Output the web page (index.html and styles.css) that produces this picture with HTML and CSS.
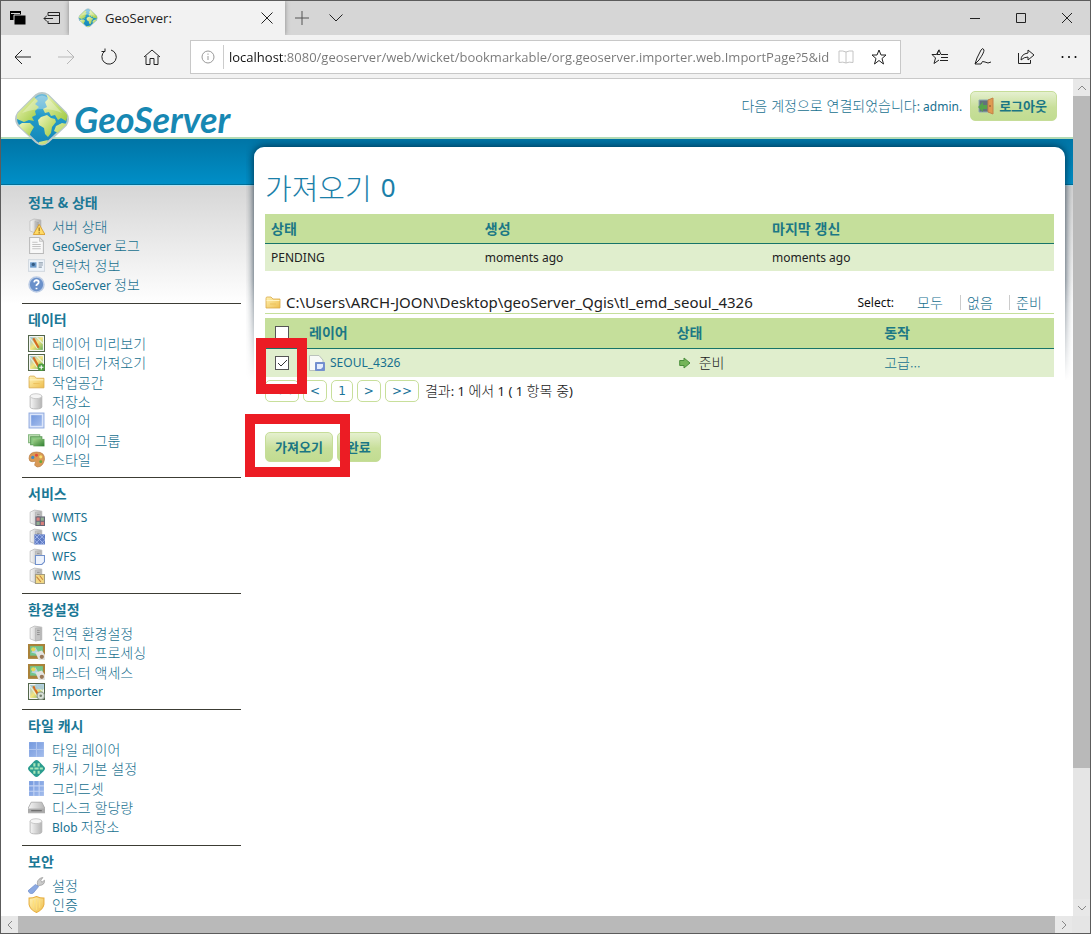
FILE: index.html
```html
<!DOCTYPE html>
<html lang="ko">
<head>
<meta charset="utf-8">
<title>GeoServer:</title>
<link rel="stylesheet" href="styles.css">
</head>
<body>
<svg class="defs" aria-hidden="true">
  <defs>
    <linearGradient id="g-gray" x2="1"><stop stop-color="#f6f6f6"/><stop offset="1" stop-color="#b4b4b4"/></linearGradient>
    <linearGradient id="g-blue" x2="1" y2="1"><stop stop-color="#7398de"/><stop offset="1" stop-color="#a4bdec"/></linearGradient>
    <linearGradient id="g-gold" x2="1" y2="1"><stop stop-color="#fff3b5"/><stop offset="1" stop-color="#eebd4c"/></linearGradient>
    <linearGradient id="g-green" x2="1" y2="1"><stop stop-color="#a4d38c"/><stop offset="1" stop-color="#2d7d2e"/></linearGradient>
    <linearGradient id="g-land" x2="1" y2="1"><stop stop-color="#f1f6bd"/><stop offset="1" stop-color="#9dc93f"/></linearGradient>
    <linearGradient id="g-sea" x2="0" y2="1"><stop stop-color="#71bddb"/><stop offset=".45" stop-color="#239bc9"/><stop offset="1" stop-color="#1386b8"/></linearGradient>
    <linearGradient id="g-map" x2="1" y2="1"><stop stop-color="#8fc0e2"/><stop offset=".5" stop-color="#f5e47c"/><stop offset="1" stop-color="#66b05c"/></linearGradient>
    <clipPath id="c-globe"><path d="M22 4Q28 0 34 4L52 22Q56 28 52 34L34 51Q28 56 22 51L4 34Q0 28 4 22Z"/></clipPath>
  </defs>
  <symbol id="globe" viewBox="0 0 56 56">
    <path d="M22 4Q28 0 34 4L52 22Q56 28 52 34L34 51Q28 56 22 51L4 34Q0 28 4 22Z" fill="url(#g-sea)" stroke="#b9c8c9" stroke-width="2"/>
    <g clip-path="url(#c-globe)" fill="url(#g-land)">
      <path d="M10 14L20 6L24 10L21 13L25 16L21 20L22 24L18 26L20 30L15 29L10 31L3 28L3 20Z"/>
      <path d="M8 32L16 32L20 36L17 41L15 46L10 42L5 34Z"/>
      <path d="M32 2L40 10L54 24L52 30L47 27L44 29L41 24L37 25L35 21L31 22L29 18L33 16L31 11L34 8Z"/>
      <path d="M27 26L33 24L37 27L41 28L42 31L38 36L37 42L34 46L31 43L30 37L25 34L24 29Z"/>
      <path d="M42 35L48 32L53 33L44 42L40 40ZM25 51L34 49L31 56L25 55Z"/>
    </g>
    <path d="M8 22L22 7Q28 2 34 7L48 22Q30 14 8 22Z" fill="#fff" opacity=".3"/>
  </symbol>
  <symbol id="server" viewBox="0 0 16 16">
    <path d="M2 3L6 1L13 2V14L7 15L2 13Z" fill="url(#g-gray)" stroke="#b7b7b7" stroke-width=".7"/>
    <path d="M7 3H12V14L7 15Z" fill="#c4c4c4" stroke="#aaa" stroke-width=".5"/><path d="M8.500 5H11M8.500 7H11M8.500 9H11" stroke="#888" stroke-width=".8"/>
  </symbol>
  <symbol id="warn" viewBox="0 0 16 16"><use href="#server" width="15" height="15"/><path d="M10.500 6L16 15.500H5Z" fill="#ffdb67" stroke="#d79b27" stroke-width=".8"/><path d="M10.500 9V12.500M10.500 13.500V14.500" stroke="#8a6113"/></symbol>
  <symbol id="page" viewBox="0 0 16 16"><path d="M1.500 .5H11L14.500 4V15.500H1.500Z" fill="#f8f8f8" stroke="#bababa"/><path d="M11 .5V4H14.500M4 5H9M4 7H12M4 9H12M4 11H12" fill="none" stroke="#c3c3c3"/></symbol>
  <symbol id="card" viewBox="0 0 16 16"><rect x=".5" y="2.500" width="15" height="11" fill="#eef4fa" stroke="#d2d9e0"/><rect x="2" y="5" width="6" height="5" fill="#6a9acb"/><circle cx="5" cy="7" r="1.500" fill="#345b82"/><path d="M10 5.500H14M10 7.500H14M10 9.500H13" stroke="#8b9aaa"/></symbol>
  <symbol id="help" viewBox="0 0 16 16"><circle cx="8" cy="8" r="7" fill="#6b91ca" stroke="#bacbe5" stroke-width="1.500"/><path d="M5.800 6Q6 3.800 8.200 4Q10.800 4.500 9.800 6.800L8 8.500V9.500M8 11V12.500" fill="none" stroke="#fff" stroke-width="1.700"/></symbol>
  <symbol id="map" viewBox="0 0 16 16"><rect x=".5" y=".5" width="15" height="15" fill="#fff" stroke="#53664b"/><rect x="2" y="2" width="12" height="12" fill="url(#g-map)"/><path d="M2 3L9 13M8 2L14 8" stroke="#e8f1dd"/><path d="M5 3L10 12" stroke="#d36b23" stroke-width="2"/></symbol>
  <symbol id="mapadd" viewBox="0 0 16 16"><use href="#map"/><circle cx="12.500" cy="12.500" r="3.500" fill="#4c9c40"/><path d="M10.500 12.500H14.500M12.500 10.500V14.500" stroke="#fff"/></symbol>
  <symbol id="folder" viewBox="0 0 16 16"><path d="M1 3.500Q1 2 2 2H6L8 4H15V13H1Z" fill="url(#g-gold)" stroke="#d9aa4a" stroke-width=".8"/><path d="M1.500 5.500H14.500" stroke="#fff3c2"/><path d="M5 9H11" stroke="#edc25d"/></symbol>
  <symbol id="store" viewBox="0 0 16 16"><path d="M2 3V13Q2 15 7.500 15T13 13V3Z" fill="url(#g-gray)" stroke="#b1b1b1" stroke-width=".8"/><ellipse cx="7.500" cy="3" rx="5.500" ry="2.300" fill="#f5f5f5" stroke="#bbb" stroke-width=".7"/></symbol>
  <symbol id="layer" viewBox="0 0 16 16"><rect x="1" y="1" width="14" height="14" fill="#dce6fa" stroke="#92ace0"/><rect x="3" y="3" width="10" height="10" fill="url(#g-blue)"/></symbol>
  <symbol id="layers" viewBox="0 0 16 16"><path d="M.5 2.500H11V10H.5Z" fill="#c8e5bd" stroke="#88b983"/><path d="M2.500 4.500H13V12H2.500Z" fill="#8bc982" stroke="#609c5a"/><path d="M5 6.500H15.500V13.500H5Z" fill="url(#g-green)"/></symbol>
  <symbol id="palette" viewBox="0 0 16 16"><path d="M1 7Q1 1 8 1Q16 1 15.500 8Q14 15 9 15Q5 14 7 11Q7 9 4 10Q1 10 1 7Z" fill="#d99955" stroke="#b97f46" stroke-width=".7"/><g fill="#4289c5"><circle cx="4.500" cy="6" r="1.500"/><circle cx="8" cy="4" r="1.400" fill="#e24c3b"/><circle cx="12" cy="5.500" r="1.500" fill="#f8de6b"/><circle cx="12" cy="10" r="1.400" fill="#65a93c"/></g></symbol>
  <symbol id="wmts" viewBox="0 0 16 16"><use href="#server"/><path d="M7 7H16V16H7Z" fill="#667"/><path d="M8 8H11V11H8ZM12 12H15V15H12Z" fill="#d9817c"/><path d="M12 8H15V11H12ZM8 12H11V15H8Z" fill="#91ae91"/></symbol>
  <symbol id="wcs" viewBox="0 0 16 16"><use href="#server"/><path d="M6 6H16V15.500H6Z" fill="#607cc4"/><path d="M6 6L15.500 15.500M15.500 6L6 15.500M11 6L16 11L11 16L6 11Z" fill="none" stroke="#a8bcf0" stroke-width=".8"/></symbol>
  <symbol id="wfs" viewBox="0 0 16 16"><use href="#server"/><path d="M7 7H15.500V13L13 15.500H7Z" fill="#eef3fc" stroke="#7090cc"/></symbol>
  <symbol id="wms" viewBox="0 0 16 16"><use href="#server"/><path d="M7 7H15.500V15.500H7Z" fill="#f3d984" stroke="#a29b80"/><path d="M8 9L12 14M11 8L14 12" stroke="#c78341"/></symbol>
  <symbol id="raster" viewBox="0 0 16 16"><rect width="16" height="14" fill="#a98239"/><rect x="2" y="2" width="12" height="9" fill="#72c68d"/><path d="M3 8L7 3L11 10" fill="#b7d5e2"/><circle cx="5" cy="5" r="2" fill="#ead75b"/><path d="M7 8L13 6L16 10V15H10Z" fill="#e3e3df"/><circle cx="13" cy="12" r="2" fill="#987757"/></symbol>
  <symbol id="importer" viewBox="0 0 16 16"><use href="#map"/><path d="M7 1H15V6H7Z" fill="#9fc5e0" opacity=".8"/><circle cx="12" cy="12" r="3.500" fill="#d8e0d7" stroke="#899789"/><circle cx="12" cy="12" r="1.200" fill="#75816f"/></symbol>
  <symbol id="tile" viewBox="0 0 16 16"><path d="M1 1H15V15H1Z" fill="url(#g-blue)"/><path d="M8 1V15M1 8H15" stroke="#aec4ef"/></symbol>
  <symbol id="grid" viewBox="0 0 16 16"><path d="M1 1H15V15H1Z" fill="url(#g-blue)"/><path d="M5.500 1V15M10.500 1V15M1 5.500H15M1 10.500H15" stroke="#c4d4f4"/></symbol>
  <symbol id="cache" viewBox="0 0 16 16"><path d="M6 1Q8-1 10 1L15 6Q17 8 15 10L10 15Q8 17 6 15L1 10Q-1 8 1 6Z" fill="#2a9c8e"/><path d="M5 3H7V6H5ZM9 3H11V6H9ZM2 7H5V9H2ZM6 7H10V9H6ZM11 7H14V9H11ZM5 10H7V13H5ZM9 10H11V13H9Z" fill="#a8e6b9"/></symbol>
  <symbol id="disk" viewBox="0 0 16 16"><path d="M3 3H13L16 9V13H0V9Z" fill="url(#g-gray)" stroke="#a1a1a1" stroke-width=".7"/><path d="M0 9H16V13H0Z" fill="#aaa"/><path d="M3 11H13" stroke="#666"/></symbol>
  <symbol id="wrench" viewBox="0 0 16 16"><path d="M9 7Q8 3 12 1L14 .5L12 3L13 5L15.500 3Q16 8 10 8L9 9Z" fill="#ccc" stroke="#999" stroke-width=".7"/><path d="M7 7L10 9L5 15Q2 17 0 13Z" fill="#8ba9e2" stroke="#7191cd" stroke-width=".7"/></symbol>
  <symbol id="shield" viewBox="0 0 16 16"><path d="M1 2Q5 2 8 .5Q11 2 15 2V8Q14 13 8 15.500Q2 13 1 8Z" fill="url(#g-gold)" stroke="#e7ae3f"/><path d="M5 4V11M8 3V13M11 4V11" stroke="#ffdf79"/></symbol>
  <symbol id="vector" viewBox="0 0 16 16"><path d="M.5 .5H10L14 5V15.500H.5Z" fill="#f8faf7" stroke="#bac2bb"/><path d="M6.500 7.500H15.500V15.500H6.500Z" fill="#718ed0" stroke="#7490cd"/><path d="M8 9H14V12L12 14H8Z" fill="#e4edfd"/></symbol>
  <symbol id="go" viewBox="0 0 12 12"><path d="M.7 3.500H5V1L11 6L5 11V8.500H.7Z" fill="#75b559" stroke="#4b8e3c"/></symbol>
  <symbol id="door" viewBox="0 0 18 18"><path d="M2 3H12V15H2Z" fill="#62727b" stroke="#8eabb3"/><path d="M11 3L16 1V17L11 15Z" fill="#df9b51" stroke="#c48149"/><path d="M13 8V10" stroke="#7d532a"/><path d="M1 10L6 5V8H10V12H6V15Z" fill="#56a34c"/></symbol>
</svg>

<div class="window">
  <div class="titlebar">
    <button class="chrome-btn tabs-btn" aria-label="탭 보관함"><svg width="16" height="16"><path d="M0 1H11V10H0Z"/><path d="M4 5H16V15H4Z" stroke="#d6d6d6"/><path d="M1 3.500H10" stroke="#d6d6d6"/></svg></button>
    <button class="chrome-btn aside-btn" aria-label="탭 보관"><svg class="line" width="18" height="14"><path d="M5 4V1.500H16.500V12.500H5V10M5 4.500H16.500M1 7.500H10M4 4.500L1 7.500L4 10.500"/></svg></button>
    <div class="tab">
      <svg width="20" height="20"><use href="#globe"/></svg>
      <span class="tab-title">GeoServer:</span>
      <button class="chrome-btn" aria-label="탭 닫기"><svg class="line" width="12" height="12"><path d="M.5 .5L11.500 11.500M11.500 .5L.5 11.500"/></svg></button>
    </div>
    <button class="chrome-btn new-tab" aria-label="새 탭"><svg class="line" width="14" height="14"><path d="M7 0V14M0 7H14"/></svg></button>
    <button class="chrome-btn" aria-label="탭 미리보기"><svg class="line" width="14" height="8"><path d="M.5 .5L7 7L13.500 .5"/></svg></button>
    <div class="window-controls">
      <button class="chrome-btn" aria-label="최소화"><svg class="line" width="12" height="12"><path d="M1 6.500H11"/></svg></button>
      <button class="chrome-btn" aria-label="최대화"><svg class="line" width="12" height="12"><path d="M1.500 1.500H10.500V10.500H1.500Z"/></svg></button>
      <button class="chrome-btn" aria-label="닫기"><svg class="line" width="12" height="12"><path d="M1 1L11 11M11 1L1 11"/></svg></button>
    </div>
  </div>

  <div class="toolbar">
    <div class="nav-buttons">
      <button class="chrome-btn" aria-label="뒤로"><svg class="line" width="18" height="16"><path d="M8 1L1 8L8 15M1 8H17"/></svg></button>
      <button class="chrome-btn muted" aria-label="앞으로"><svg class="line" width="18" height="16"><path d="M10 1L17 8L10 15M17 8H1"/></svg></button>
      <button class="chrome-btn" aria-label="새로 고침"><svg class="line" width="18" height="18"><path d="M5 3A7.200 7.200 0 1 0 11 2M5 .5V3.500H1.500"/></svg></button>
      <button class="chrome-btn" aria-label="홈"><svg class="line" width="18" height="18"><path d="M1 9L9 2L17 9M3 8V16.500H7V10.500H11V16.500H15V8"/></svg></button>
    </div>
    <div class="address">
      <svg class="line info" width="14" height="14"><circle cx="7" cy="7" r="6"/><path d="M7 6V10M7 3.500V4.800"/></svg>
      <input class="url" type="text" aria-label="주소" value="localhost:8080/geoserver/web/wicket/bookmarkable/org.geoserver.importer.web.ImportPage?5&amp;id">
      <button class="chrome-btn reading" aria-label="읽기용 보기"><svg class="line" width="16" height="14"><path d="M8 2V13M8 2Q5 .5 1 1V12.500Q5 11.500 8 13Q11 11.500 15 12.500V1Q11 .5 8 2"/></svg></button>
      <button class="chrome-btn" aria-label="즐겨찾기"><svg class="line" width="16" height="16"><path d="M8 1L10 6H15L11 9.500L12.500 15L8 11.500L3.500 15L5 9.500L1 6H6Z"/></svg></button>
    </div>
    <div class="tool-buttons">
      <button class="chrome-btn" aria-label="허브"><svg class="line" width="18" height="16"><path d="M9 5.500H6L8 .8L5.500 5.500H1L4.500 9L3 14.500L8 11M8 1L10 5.500H17M10 8.500H17M9 11.500H17"/></svg></button>
      <button class="chrome-btn" aria-label="메모"><svg class="line" width="18" height="18"><path d="M1 16L3 10L7 2Q9-1 10 2Q10 5 5 12L1 16H7Q8 12 11 14T17 14"/></svg></button>
      <button class="chrome-btn" aria-label="공유"><svg class="line" width="18" height="16"><path d="M1.500 4V14.500H13.500V11M4 11Q4 5 11 4V1L17 6L11 11V8Q7 8 4 11Z"/></svg></button>
      <button class="chrome-btn" aria-label="기타"><svg width="16" height="4"><circle cx="1.500" cy="2" r="1"/><circle cx="8" cy="2" r="1"/><circle cx="14.500" cy="2" r="1"/></svg></button>
    </div>
  </div>

  <div class="viewport">
    <div class="page">
      <header class="site-header">
        <a class="logo" href="#"><svg width="56" height="56"><use href="#globe"/></svg><span class="logo-text">GeoServer</span></a>
        <div class="account">
          <span class="latin"><span class="ko">다음 계정으로 연결되었습니다</span>: admin.</span>
          <button class="btn logout"><svg width="18" height="18"><use href="#door"/></svg>로그아웃</button>
        </div>
      </header>
      <div class="content">
        <nav class="sidebar">
          <section class="menu"><h2>정보 &amp; 상태</h2><ul>
            <li><a href="#"><svg><use href="#warn"/></svg><span class="ko">서버 상태</span></a></li>
            <li><a href="#"><svg><use href="#page"/></svg><span>GeoServer <span class="ko">로그</span></span></a></li>
            <li><a href="#"><svg><use href="#card"/></svg><span class="ko">연락처 정보</span></a></li>
            <li><a href="#"><svg><use href="#help"/></svg><span>GeoServer <span class="ko">정보</span></span></a></li>
          </ul></section>
          <section class="menu"><h2>데이터</h2><ul>
            <li><a href="#"><svg><use href="#map"/></svg><span class="ko">레이어 미리보기</span></a></li>
            <li><a href="#"><svg><use href="#mapadd"/></svg><span class="ko">데이터 가져오기</span></a></li>
            <li><a href="#"><svg><use href="#folder"/></svg><span class="ko">작업공간</span></a></li>
            <li><a href="#"><svg><use href="#store"/></svg><span class="ko">저장소</span></a></li>
            <li><a href="#"><svg><use href="#layer"/></svg><span class="ko">레이어</span></a></li>
            <li><a href="#"><svg><use href="#layers"/></svg><span class="ko">레이어 그룹</span></a></li>
            <li><a href="#"><svg><use href="#palette"/></svg><span class="ko">스타일</span></a></li>
          </ul></section>
          <section class="menu"><h2>서비스</h2><ul>
            <li><a href="#"><svg><use href="#wmts"/></svg><span>WMTS</span></a></li>
            <li><a href="#"><svg><use href="#wcs"/></svg><span>WCS</span></a></li>
            <li><a href="#"><svg><use href="#wfs"/></svg><span>WFS</span></a></li>
            <li><a href="#"><svg><use href="#wms"/></svg><span>WMS</span></a></li>
          </ul></section>
          <section class="menu"><h2>환경설정</h2><ul>
            <li><a href="#"><svg><use href="#server"/></svg><span class="ko">전역 환경설정</span></a></li>
            <li><a href="#"><svg><use href="#raster"/></svg><span class="ko">이미지 프로세싱</span></a></li>
            <li><a href="#"><svg><use href="#raster"/></svg><span class="ko">래스터 액세스</span></a></li>
            <li><a href="#"><svg><use href="#importer"/></svg><span>Importer</span></a></li>
          </ul></section>
          <section class="menu"><h2>타일 캐시</h2><ul>
            <li><a href="#"><svg><use href="#tile"/></svg><span class="ko">타일 레이어</span></a></li>
            <li><a href="#"><svg><use href="#cache"/></svg><span class="ko">캐시 기본 설정</span></a></li>
            <li><a href="#"><svg><use href="#grid"/></svg><span class="ko">그리드셋</span></a></li>
            <li><a href="#"><svg><use href="#disk"/></svg><span class="ko">디스크 할당량</span></a></li>
            <li><a href="#"><svg><use href="#store"/></svg><span>Blob <span class="ko">저장소</span></span></a></li>
          </ul></section>
          <section class="menu"><h2>보안</h2><ul>
            <li><a href="#"><svg><use href="#wrench"/></svg><span class="ko">설정</span></a></li>
            <li><a href="#"><svg><use href="#shield"/></svg><span class="ko">인증</span></a></li>
          </ul></section>
        </nav>
        <div class="shell">
          <div class="shade"><div class="shade-box"></div></div>
          <main class="panel">
            <h1><span class="title-ko">가져오기</span> 0</h1>
            <table class="grid status-table">
              <colgroup><col class="c27"><col class="c36"><col></colgroup>
              <thead><tr><th>상태</th><th>생성</th><th>마지막 갱신</th></tr></thead>
              <tbody><tr><td>PENDING</td><td>moments ago</td><td>moments ago</td></tr></tbody>
            </table>
            <div class="source">
              <svg width="16" height="16"><use href="#folder"/></svg>
              <span class="path">C:\Users\ARCH-JOON\Desktop\geoServer_Qgis\tl_emd_seoul_4326</span>
              <span class="select-label">Select:</span>
              <ul class="select-links"><li><a href="#">모두</a></li><li><a href="#">없음</a></li><li><a href="#">준비</a></li></ul>
            </div>
            <table class="grid layer-table">
              <colgroup><col class="c-check"><col class="c47"><col class="c26"><col></colgroup>
              <thead><tr><th><input type="checkbox" aria-label="모두 선택"></th><th>레이어</th><th>상태</th><th>동작</th></tr></thead>
              <tbody><tr>
                <td><div class="marked"><input type="checkbox" aria-label="SEOUL_4326 선택" checked><span class="marker marker-check"></span></div></td>
                <td><a class="with-icon" href="#"><svg width="16" height="16"><use href="#vector"/></svg>SEOUL_4326</a></td>
                <td><span class="with-icon state"><svg width="12" height="12"><use href="#go"/></svg><span class="ko">준비</span></span></td>
                <td><a class="ko" href="#">고급...</a></td>
              </tr></tbody>
            </table>
            <div class="pager">
              <button>&lt;&lt;</button><button>&lt;</button><button>1</button><button>&gt;</button><button>&gt;&gt;</button>
              <span class="results"><span class="ko">결과</span>: 1 <span class="ko">에서</span> 1 ( 1 <span class="ko">항목 중</span>)</span>
            </div>
            <div class="actions">
              <div class="marked"><button class="btn">가져오기</button><span class="marker marker-button"></span></div>
              <button class="btn">완료</button>
            </div>
          </main>
        </div>
      </div>
    </div>
    <div class="vscroll">
      <button class="scroll-btn" aria-label="위로"><svg width="10" height="6"><path d="M1 5L5 1L9 5"/></svg></button>
      <div class="vthumb"></div><div class="vtrack"></div>
      <button class="scroll-btn" aria-label="아래로"><svg width="10" height="6"><path d="M1 1L5 5L9 1"/></svg></button>
    </div>
  </div>
  <div class="hscroll">
    <button class="scroll-btn" aria-label="왼쪽으로"><svg width="6" height="10"><path d="M5 1L1 5L5 9"/></svg></button>
    <div class="hthumb"></div>
    <button class="scroll-btn" aria-label="오른쪽으로"><svg width="6" height="10"><path d="M1 1L5 5L1 9"/></svg></button>
    <div class="corner"></div>
  </div>
</div>
</body>
</html>
```

FILE: styles.css
```css
* { box-sizing: border-box; }
body { margin: 0; font: 12px/19px "Noto Sans", "Noto Sans CJK KR", sans-serif; color: #222; background: #fff; }
button, input { font: inherit; margin: 0; }
button { padding: 0; border: 0; background: none; color: inherit; }
a { color: #17708f; text-decoration: none; }
ul { list-style: none; margin: 0; padding: 0; }
svg { display: block; flex: none; }
.defs { position: absolute; width: 0; height: 0; }
.ko { font-family: "Noto Sans CJK KR", sans-serif; font-size: 14px; font-weight: 300; }

.window { height: 100vh; display: flex; flex-direction: column; border: 1px solid #5c5c5c; overflow: hidden; }
.chrome-btn { display: flex; align-items: center; justify-content: center; width: 18px; height: 18px; color: #222; }
.line { fill: none; stroke: currentColor; stroke-width: 1; }
.muted { color: #b7b7b7; }

.titlebar { display: flex; align-items: center; height: 34px; flex: none; background: #d6d6d6; font-family: "Open Sans", sans-serif; }
.tabs-btn { margin-left: 8px; }
.aside-btn { margin: 0 8px 0 16px; }
.tab { display: flex; align-items: center; align-self: stretch; width: 216px; padding: 0 9px; background: #f2f2f2; box-shadow: 0 0 5px #888; clip-path: inset(0 -6px); }
.tab-title { flex: 1; padding-left: 7px; font-size: 13px; color: #222; }
.new-tab { margin: 0 16px 0 8px; color: #555; }
.window-controls { display: flex; gap: 28px; margin-left: auto; padding-right: 14px; }

.toolbar { display: flex; align-items: center; height: 44px; flex: none; background: #f2f2f2; border-bottom: 1px solid #c9c9c9; }
.nav-buttons { display: flex; gap: 25px; padding: 0 29px 0 13px; }
.address { flex: 1; display: flex; align-items: center; height: 34px; border: 1px solid #c8c8c8; background: #fff; padding: 0 12px 0 10px; }
.info { color: #999; margin-right: 8px; }
.url { flex: 1; min-width: 0; height: 24px; border: 0; border-left: 1px solid #ccc; padding: 0 0 0 5px; font: 13px/24px "Open Sans", sans-serif; color: transparent; background: linear-gradient(90deg, #111 60px, #777 60px); background-clip: text; outline: 0; }
.address .reading { margin: 0 15px 0 3px; color: #c4c4c4; }
.tool-buttons { display: flex; gap: 25px; padding: 0 12px 0 30px; }

.viewport { flex: 1; min-height: 0; display: flex; }
.page { flex: 1; min-width: 0; overflow: hidden; }
.site-header { display: flex; justify-content: space-between; height: 58px; padding: 12px 16px 0 13px; }
.logo { display: flex; position: relative; z-index: 1; height: 56px; color: #1788b3; }
.logo-text { padding-left: 4px; font: italic bold 36px/56px Lato, sans-serif; }
.account { display: flex; align-items: center; gap: 8px; height: 30px; color: #17708f; }
.btn { display: inline-flex; align-items: center; justify-content: center; gap: 4px; height: 30px; padding: 0 9px; border: 1px solid #c6dd98; border-radius: 5px; background: linear-gradient(#e5f0cf, #c8df9a 55%, #c1dc91); font: bold 13px/20px "Noto Sans CJK KR", sans-serif; color: #1a7684; white-space: nowrap; }
.logout { padding: 0 9px 0 6px; }

.content { display: flex; border-top: 2px solid #b3dbb5; background: linear-gradient(#0075a6, #008fc7 45px, #006f98 45px, #006f98 46px, #b5e5f5 46px, #b5e5f5 47px, #d6d6d6 47px, #fff 165px); }
.sidebar { width: 245px; flex: none; padding: 48px 5px 30px 21px; }
.menu { padding: 5px 0 9px 6px; border-bottom: 1px solid #3c3c34; }
.menu + .menu { padding-bottom: 8px; }
.menu h2 { margin: 0 0 5px; font: bold 14px/20px "Noto Sans CJK KR", sans-serif; color: #1b7896; }
.menu li { height: 19px; }
.menu li:nth-child(3n+2) { height: 20px; }
.menu a { display: flex; align-items: center; gap: 7px; height: 19px; white-space: nowrap; }
.menu svg { width: 17px; height: 17px; }

.shell { position: relative; flex: 1; min-width: 0; padding: 8px 8px 0; }
.shade { position: absolute; inset: 0 0 auto; height: 242px; overflow: hidden; mask-image: linear-gradient(#000 140px, transparent); }
.shade-box { height: 300px; margin: 8px 8px 0; border-radius: 10px 10px 0 0; box-shadow: 0 0 8px rgba(0, 25, 45, .85); }
.panel { position: relative; min-height: 800px; padding: 22px 11px 0; border-radius: 10px 10px 0 0; background: #fff; }
h1 { display: flex; gap: 9px; margin: 0 0 9px; font: 26px/36px "Noto Sans", sans-serif; color: #1b7fa9; }
.title-ko { font: 300 29px/36px "Noto Sans CJK KR", sans-serif; }

.grid { width: 100%; table-layout: fixed; border-collapse: collapse; }
.grid th { height: 29px; padding: 0 6px; background: #c5df9b; border-bottom: 1px solid #177468; text-align: left; font: bold 14px/19px "Noto Sans CJK KR", sans-serif; color: #1c7885; }
.grid td { height: 28px; padding: 0 6px; background: #e0eecd; }
.c27 { width: 27.1%; }
.c36 { width: 36.4%; }
.source { display: flex; align-items: center; height: 22px; margin: 21px 0 4px; border-bottom: 1px solid #c5df9b; white-space: nowrap; }
.path { flex: 1; padding-left: 5px; font-size: 15px; }
.select-label { margin-right: 13px; color: #111; }
.select-links { display: flex; font: 300 14px/15px "Noto Sans CJK KR", sans-serif; }
.select-links li { width: 49px; padding-left: 6px; border-left: 1px solid #ccc; }
.select-links li:first-child { width: 53px; padding-left: 10px; border: 0; }
.select-links li:last-child { width: 45px; }
.layer-table th { height: 30px; }
.layer-table td { height: 29px; }
.layer-table th:first-child, .layer-table td:first-child { padding: 0 10px; }
.c-check { width: 38px; }
.c47 { width: 46.6%; }
.c26 { width: 26.3%; }
input[type="checkbox"] { appearance: none; display: block; width: 14px; height: 14px; border: 1px solid #555; background: #fff; }
input[type="checkbox"]:checked { background: #fff url("data:image/svg+xml,%3Csvg xmlns='http://www.w3.org/2000/svg' viewBox='0 0 12 12'%3E%3Cpath d='M2 6L5 9L11 3' fill='none' stroke='%23333'/%3E%3C/svg%3E"); }
.with-icon { display: flex; align-items: center; gap: 5px; }
.state { gap: 8px; padding-left: 2px; }
.marked { position: relative; }
.marker { position: absolute; z-index: 2; border: 10px solid #ec1c24; pointer-events: none; }
.marker-check { inset: -18px auto auto -19px; width: 51px; height: 56px; }
.marker-button { inset: -18px -17px -15px -20px; }

.pager { display: flex; gap: 4px; padding-top: 3px; font-size: 13px; }
.pager button { height: 22px; padding: 0 6px; border: 1px solid #c8df9b; border-radius: 5px; background: #fff; color: #1b7399; font: 12px/20px "DejaVu Sans", sans-serif; }
.pager .results { padding-left: 2px; line-height: 21px; white-space: nowrap; }
.actions { display: flex; gap: 4px; margin-top: 30px; }

.vscroll { display: flex; flex-direction: column; width: 17px; flex: none; background: #e5e5e5; }
.scroll-btn { display: flex; align-items: center; justify-content: center; width: 17px; height: 17px; flex: none; background: #e8e8e8; }
.scroll-btn svg { fill: none; stroke: #888; }
.vthumb { flex: 671; background: #b9b9b9; }
.vtrack { flex: 131; }
.hscroll { display: flex; height: 17px; flex: none; background: #e5e5e5; }
.hthumb { flex: 1; background: #b9b9b9; }
.corner { width: 18px; }
```
